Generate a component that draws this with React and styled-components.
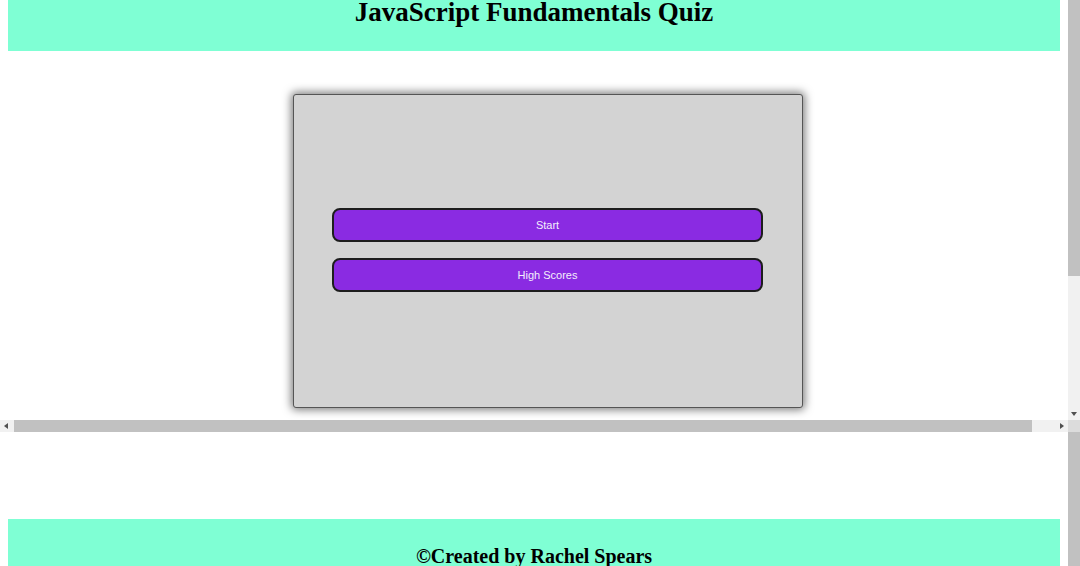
import styled, { createGlobalStyle, css } from "styled-components";

const GlobalStyle = createGlobalStyle`
  html, body {
    margin: 0;
    padding: 0;
    overflow: hidden;
    background: #fff;
  }
  body {
    font-family: "Liberation Serif", "Times New Roman", serif;
  }
`;

const Screen = styled.div`
  width: 1080px;
  height: 566px;
  display: flex;
  flex-direction: column;
`;

// top frame: page view plus its two scrollbars
const Frame = styled.div`
  flex: none;
  display: grid;
  grid-template-columns: 1068px 12px;
  grid-template-rows: 420px 12px;
`;

const Viewport = styled.div`
  overflow: hidden;
`;

const Page = styled.div`
  width: 1095px;
`;

const Header = styled.header`
  width: 1052px;
  height: 51px;
  margin: 0 8px;
  background: aquamarine;
  text-align: center;
`;

const Title = styled.h1`
  margin: 0;
  font-size: 27px;
  line-height: 25px;
  font-weight: bold;
  color: #000;
`;

const Main = styled.main`
  padding: 43px 0 213px;
  display: flex;
  justify-content: center;
`;

const Card = styled.section`
  width: 510px;
  height: 314px;
  box-sizing: border-box;
  padding-bottom: 3px;
  background: lightgray;
  border: 1px solid #555;
  border-radius: 3px;
  box-shadow: 0 0 8px 2px rgba(0, 0, 0, 0.5);
  display: flex;
  flex-direction: column;
  align-items: center;
  justify-content: center;
  gap: 16px;
`;

const QuizButton = styled.button`
  width: 431px;
  height: 34px;
  background: blueviolet;
  color: #f4eefc;
  border: 2px solid #1d1d1d;
  border-radius: 8px;
  font-family: "Liberation Sans", Arial, sans-serif;
  font-size: 11px;
  cursor: pointer;
`;

const ScrollBar = styled.div`
  display: flex;
  flex-direction: ${(p) => (p.$vertical ? "column" : "row")};
  background: #f1f1f1;
`;

const Track = styled.div`
  flex: 1;
  display: flex;
  flex-direction: ${(p) => (p.$vertical ? "column" : "row")};
`;

const Thumb = styled.div`
  flex: none;
  background: #c1c1c1;
  ${(p) =>
    p.$vertical
      ? css`
          height: ${p.$size}px;
        `
      : css`
          width: ${p.$size}px;
          margin-left: ${p.$offset || 0}px;
        `}
`;

const arrows = {
  down: css`
    border-left: 3px solid transparent;
    border-right: 3px solid transparent;
    border-top: 4px solid #505050;
  `,
  left: css`
    border-top: 3px solid transparent;
    border-bottom: 3px solid transparent;
    border-right: 4px solid #505050;
  `,
  right: css`
    border-top: 3px solid transparent;
    border-bottom: 3px solid transparent;
    border-left: 4px solid #505050;
  `,
};

const ArrowButton = styled.div`
  flex: none;
  width: 12px;
  height: 12px;
  display: flex;
  align-items: center;
  justify-content: center;
  background: #f1f1f1;

  &::after {
    content: "";
    width: 0;
    height: 0;
    ${(p) => arrows[p.$dir]}
  }
`;

const Corner = styled.div`
  background: #dcdcdc;
`;

// lower part: footer and the outer page scrollbar
const Lower = styled.div`
  flex: 1;
  display: flex;
  overflow: hidden;
`;

const LowerContent = styled.div`
  flex: 1;
  padding: 87px 8px 0;
`;

const OuterThumb = styled.div`
  width: 12px;
  flex: none;
  background: #c1c1c1;
`;

const Footer = styled.footer`
  height: 47px;
  box-sizing: border-box;
  padding-top: 26px;
  background: aquamarine;
  text-align: center;
`;

const Credit = styled.h3`
  margin: 0;
  font-size: 20px;
  line-height: normal;
  font-weight: bold;
  color: #000;
  white-space: nowrap;
`;

export default function App() {
  return (
    <>
      <GlobalStyle />
      <Screen>
        <Frame>
          <Viewport>
            <Page>
              <Header>
                <Title>JavaScript Fundamentals Quiz</Title>
              </Header>
              <Main>
                <Card>
                  <QuizButton>Start</QuizButton>
                  <QuizButton>High Scores</QuizButton>
                </Card>
              </Main>
            </Page>
          </Viewport>
          <ScrollBar $vertical>
            <Track $vertical>
              <Thumb $vertical $size={276} />
            </Track>
            <ArrowButton $dir="down" />
          </ScrollBar>
          <ScrollBar>
            <ArrowButton $dir="left" />
            <Track>
              <Thumb $size={1018} $offset={2} />
            </Track>
            <ArrowButton $dir="right" />
          </ScrollBar>
          <Corner />
        </Frame>
        <Lower>
          <LowerContent>
            <Footer>
              <Credit>©Created by Rachel Spears</Credit>
            </Footer>
          </LowerContent>
          <OuterThumb />
        </Lower>
      </Screen>
    </>
  );
}
